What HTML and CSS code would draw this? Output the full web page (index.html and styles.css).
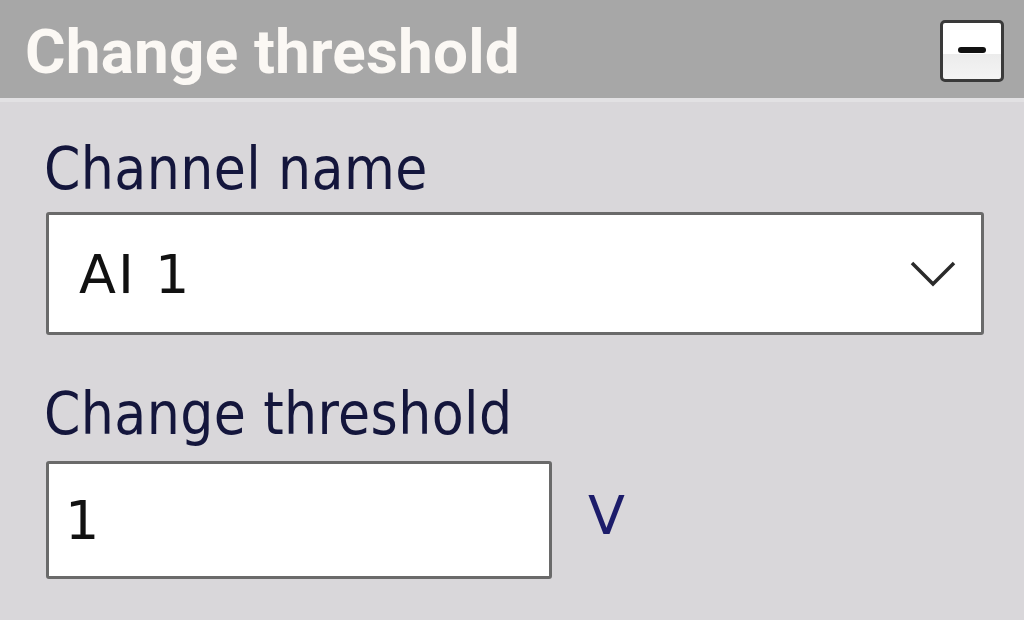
FILE: index.html
```html
<!DOCTYPE html>
<html lang="en">
<head>
    <meta charset="UTF-8">
    <title>Change threshold</title>
    <link rel="stylesheet" href="styles.css">
</head>
<body>
    <section class="panel">
        <header class="panel-header">
            <h1>Change threshold</h1>
            <button class="collapse-btn" aria-label="Collapse"><span></span></button>
        </header>

        <div class="panel-body">
            <label for="channelSelect">Channel name</label>
            <div class="select-box" id="channelSelect">
                <span class="select-value">AI 1</span>
                <svg class="chevron" viewBox="0 0 48 30" width="48" height="30">
                    <path d="M3 4 L24 25 L45 4" fill="none" stroke="#2a2a2a" stroke-width="3.5"/>
                </svg>
            </div>

            <label for="thresholdInput">Change threshold</label>
            <div class="input-row">
                <div class="text-input" id="thresholdInput">1</div>
                <span class="unit">V</span>
            </div>
        </div>
    </section>
</body>
</html>
```

FILE: styles.css
```css
* {
    box-sizing: border-box;
    margin: 0;
    padding: 0;
}

body {
    width: 1024px;
    height: 620px;
    overflow: hidden;
    background-color: #d9d7da;
    font-family: 'DejaVu Sans', sans-serif;
}

.panel-header {
    height: 102px;
    background-color: #a7a7a7;
    display: flex;
    align-items: center;
    justify-content: space-between;
    padding: 0 20px 0 25px;
    border-bottom: 4px solid #e2e1e3;
}

.panel-header h1 {
    font-family: Roboto, 'Liberation Sans', sans-serif;
    color: #fbf8f4;
    font-size: 62px;
    font-weight: bold;
    letter-spacing: 0.2px;
    margin-top: 4px;
}

.collapse-btn {
    width: 64px;
    height: 62px;
    background: linear-gradient(#fff 0%, #fff 55%, #ececec 56%, #f4f4f4 100%);
    border: 3px solid #3a3a3a;
    border-radius: 5px;
    display: flex;
    align-items: center;
    justify-content: center;
    margin-top: 4px;
}

.collapse-btn span {
    display: block;
    width: 28px;
    height: 6px;
    background-color: #111;
    border-radius: 3px;
    margin-top: -2px;
}

.panel-body {
    padding: 34px 41px 0 46px;
    color: #14163c;
}

label {
    display: block;
    font-family: 'DejaVu Sans Condensed', 'DejaVu Sans', sans-serif;
    font-stretch: condensed;
    font-size: 58px;
    line-height: 66px;
    letter-spacing: 0.4px;
    margin-left: -2px;
}

.select-box {
    margin-top: 10px;
    width: 938px;
    height: 123px;
    background-color: #fff;
    border: 3px solid #6a6a6a;
    border-radius: 3px;
    display: flex;
    align-items: center;
    justify-content: space-between;
    padding: 0 24px 0 30px;
    color: #111;
    margin-bottom: 46px;
}

.select-value {
    font-size: 54px;
    letter-spacing: 2px;
    margin-top: 2px;
}

.input-row {
    margin-top: 14px;
    display: flex;
    align-items: center;
    gap: 36px;
}

.text-input {
    width: 506px;
    height: 118px;
    background-color: #fff;
    border: 3px solid #6a6a6a;
    border-radius: 3px;
    padding: 0 16px;
    display: flex;
    align-items: center;
    font-size: 54px;
    color: #111;
}

.unit {
    font-size: 54px;
    color: #1c1c6a;
    margin-top: -10px;
}
```
